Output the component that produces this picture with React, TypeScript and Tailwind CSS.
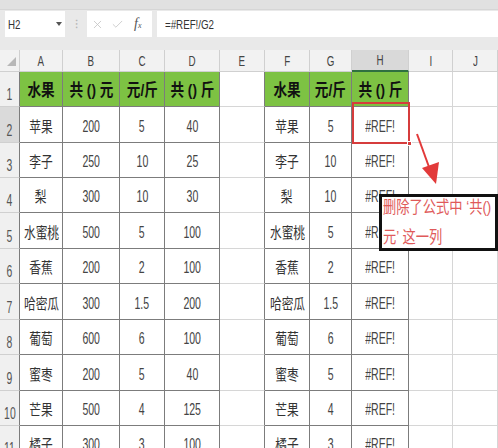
import { Check, X } from 'lucide-react'

const font = "font-['Liberation_Sans','Noto_Sans_CJK_SC',sans-serif]"

const letters = ['', 'A', 'B', 'C', 'D', 'E', 'F', 'G', 'H', 'I', 'J']
const tableCols = [1, 2, 3, 4, 6, 7, 8]

const fruits = [
  ['苹果', '200', '5', '40'],
  ['李子', '250', '10', '25'],
  ['梨', '300', '10', '30'],
  ['水蜜桃', '500', '5', '100'],
  ['香蕉', '200', '2', '100'],
  ['哈密瓜', '300', '1.5', '200'],
  ['葡萄', '600', '6', '100'],
  ['蜜枣', '200', '5', '40'],
  ['芒果', '500', '4', '125'],
  ['橘子', '300', '3', '100'],
]

function cellText(r: number, c: number) {
  if (r === 1) {
    const head: Record<number, string> = {
      1: '水果',
      2: '共 () 元',
      3: '元/斤',
      4: '共 () 斤',
      6: '水果',
      7: '元/斤',
      8: '共 () 斤',
    }
    return head[c] ?? ''
  }
  const row = fruits[r - 2]
  if (!row) return ''
  if (c >= 1 && c <= 4) return row[c - 1]
  if (c === 6) return row[0]
  if (c === 7) return row[2]
  if (c === 8) return '#REF!'
  return ''
}

function Cell({ r, c }: { r: number; c: number }) {
  // column header row
  if (r === 0) {
    if (c === 0) {
      return (
        <div className="relative bg-[#f2f2f2] border-r border-b border-[#d0d0d0]">
          <div className="absolute right-[3px] bottom-[5px] w-0 h-0 border-l-[9px] border-l-transparent border-b-[9px] border-b-[#b8b8b8]" />
        </div>
      )
    }
    const sel = c === 8
    return (
      <div
        className={`flex items-center justify-center border-r border-[#d0d0d0] ${
          sel ? 'bg-[#d9d9d9] border-b-2 border-b-[#2f7040]' : 'bg-[#f2f2f2] border-b border-b-[#d0d0d0]'
        }`}
      >
        <span className="inline-block scale-x-[0.7] text-[14px] leading-none text-[#444]">{letters[c]}</span>
      </div>
    )
  }

  // row header column
  if (c === 0) {
    const sel = r === 2
    return (
      <div
        className={`flex items-end justify-center pb-[3px] border-b border-[#d0d0d0] border-r border-r-[#7c7c7c] ${
          sel ? 'bg-[#dadada]' : 'bg-[#f0f0f0]'
        }`}
      >
        <span className="inline-block scale-x-[0.65] text-[16px] leading-none text-[#555]">{r}</span>
      </div>
    )
  }

  const inTable = tableCols.includes(c)
  const darkRight = inTable || tableCols.includes(c + 1)
  const text = cellText(r, c)
  const isHead = r === 1 && inTable
  const isCjk = /[\u4e00-\u9fff]/.test(text)

  return (
    <div
      className={`flex items-center justify-center border-r border-b ${
        darkRight ? 'border-r-[#7c7c7c]' : 'border-r-[#d6d6d6]'
      } ${inTable ? 'border-b-[#7c7c7c]' : 'border-b-[#d6d6d6]'} ${isHead ? 'bg-[#7dc243]' : 'bg-white'}`}
    >
      {isHead ? (
        <span className="inline-block scale-x-[0.8] text-[17px] font-bold leading-none text-[#111] whitespace-nowrap pt-[2px]">
          {text}
        </span>
      ) : isCjk ? (
        <span className="inline-block scale-x-[0.78] text-[15px] leading-none text-[#333] whitespace-nowrap pt-[3px]">
          {text}
        </span>
      ) : (
        <span className="inline-block scale-x-[0.62] text-[17px] leading-none text-[#444] whitespace-nowrap pt-[3px]">
          {text}
        </span>
      )}
    </div>
  )
}

export default function App() {
  const rows = Array.from({ length: 12 }, (_, i) => i)
  const cols = Array.from({ length: 11 }, (_, i) => i)

  return (
    <div className={`relative w-[498px] h-[448px] overflow-hidden bg-white ${font}`}>
      {/* formula bar */}
      <div className="h-[50px] bg-[#e9e9e9] flex flex-col">
        <div className="h-[10px] bg-[#e1e1e1] border-b border-[#d6d6d6]" />
        <div className="flex items-center h-[26px] mt-[1px] pl-[5px]">
          <div className="w-[60px] h-full bg-white flex items-center justify-between pl-[3px] pr-[3px]">
            <span className="inline-block origin-left scale-x-[0.75] text-[13px] leading-none text-[#333]">H2</span>
            <span className="w-0 h-0 border-l-[3px] border-r-[3px] border-t-[4px] border-l-transparent border-r-transparent border-t-[#555]" />
          </div>
          <div className="w-[22px] text-center text-[12px] leading-none text-[#b5b5b5]">⁝</div>
          <div className="w-[65px] h-full bg-white flex items-center pl-[4px] gap-[7px]">
            <X size={13} strokeWidth={1.5} className="text-[#c4c4c4]" />
            <Check size={13} strokeWidth={1.5} className="text-[#c4c4c4]" />
            <span className="ml-[3px] font-['Liberation_Serif',serif] italic text-[14px] leading-none text-[#555]">
              f<span className="text-[8px]">x</span>
            </span>
          </div>
          <div className="ml-[5px] flex-1 h-full bg-white flex items-center pl-[8px]">
            <span className="inline-block origin-left scale-x-[0.75] text-[13px] leading-none text-[#333]">=#REF!/G2</span>
          </div>
        </div>
      </div>

      {/* sheet grid */}
      <div className="grid grid-cols-[20px_43px_57px_45px_55px_45px_45px_42px_57px_44px_45px] grid-rows-[22px_35px_36px_35px_35px_36px_35px_36px_35px_36px_35px_35px]">
        {rows.map((r) => cols.map((c) => <Cell key={`${r}-${c}`} r={r} c={c} />))}
      </div>

      {/* selected cell H2 */}
      <div className="absolute left-[352px] top-[102px] w-[58px] h-[42px] border-2 border-[#d63c3c]">
        <div className="absolute -right-[4px] -bottom-[4px] w-[5px] h-[5px] bg-[#d63c3c] border border-white" />
      </div>

      {/* arrow */}
      <svg className="absolute left-0 top-0 pointer-events-none" width="498" height="448">
        <line x1="417" y1="134" x2="429" y2="167" stroke="#e23a3a" strokeWidth="2" />
        <polygon points="436,184 422,168 439,162" fill="#e23a3a" />
      </svg>

      {/* callout */}
      <div className="absolute left-[379px] top-[194px] w-[119px] h-[57px] border-[3px] border-[#111] bg-white pl-[1px]">
        <div className="h-[22px] leading-[22px] text-[17px] text-[#e05a5a] whitespace-nowrap origin-left scale-x-[0.78]">
          删除了公式中 ‘共()
        </div>
        <div className="mt-[8px] h-[22px] leading-[22px] text-[17px] text-[#e05a5a] whitespace-nowrap origin-left scale-x-[0.78]">
          元’ 这一列
        </div>
      </div>
    </div>
  )
}
